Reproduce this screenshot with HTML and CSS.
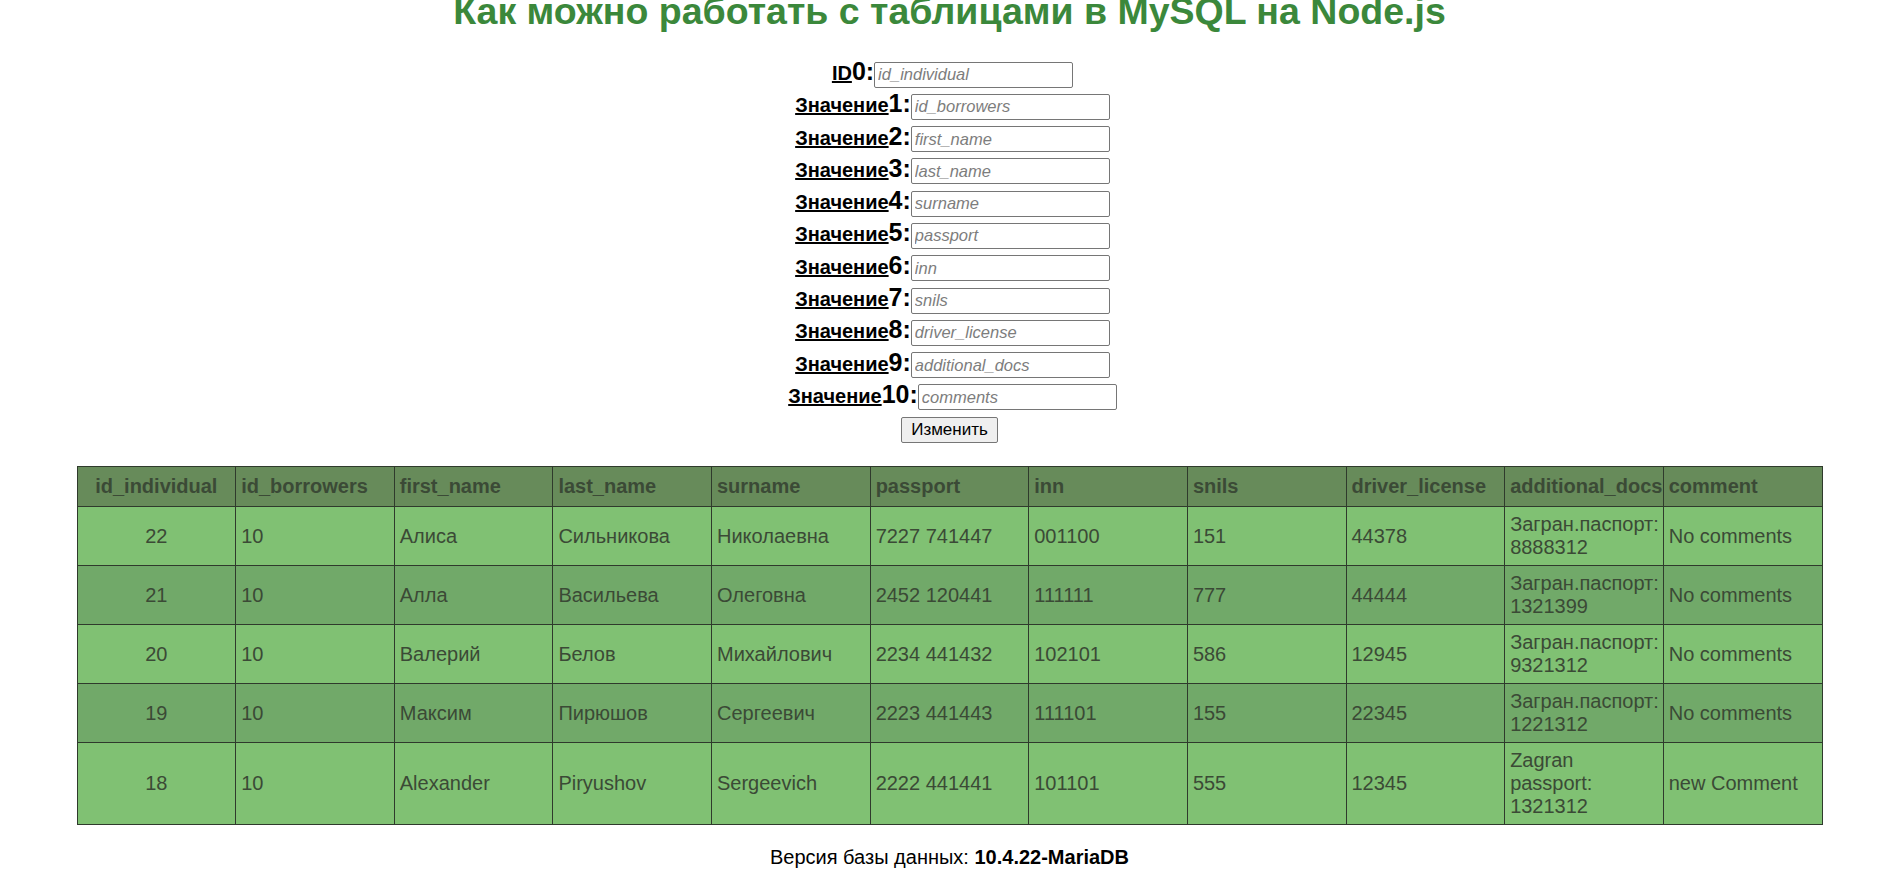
FILE: index.html
```html
<!DOCTYPE html>
<html lang="ru">
<head>
<meta charset="utf-8">
<title>MySQL на Node.js</title>
<link rel="stylesheet" href="styles.css">
</head>
<body>
<div class="page">
  <h1 class="title">Как можно работать с таблицами в MySQL на Node.js</h1>
  <form class="edit-form">
    <div class="field"><u class="lbl">ID</u><b class="num">0:</b><input class="inp" type="text" placeholder="id_individual"></div>
    <div class="field"><u class="lbl">Значение</u><b class="num">1:</b><input class="inp" type="text" placeholder="id_borrowers"></div>
    <div class="field"><u class="lbl">Значение</u><b class="num">2:</b><input class="inp" type="text" placeholder="first_name"></div>
    <div class="field"><u class="lbl">Значение</u><b class="num">3:</b><input class="inp" type="text" placeholder="last_name"></div>
    <div class="field"><u class="lbl">Значение</u><b class="num">4:</b><input class="inp" type="text" placeholder="surname"></div>
    <div class="field"><u class="lbl">Значение</u><b class="num">5:</b><input class="inp" type="text" placeholder="passport"></div>
    <div class="field"><u class="lbl">Значение</u><b class="num">6:</b><input class="inp" type="text" placeholder="inn"></div>
    <div class="field"><u class="lbl">Значение</u><b class="num">7:</b><input class="inp" type="text" placeholder="snils"></div>
    <div class="field"><u class="lbl">Значение</u><b class="num">8:</b><input class="inp" type="text" placeholder="driver_license"></div>
    <div class="field"><u class="lbl">Значение</u><b class="num">9:</b><input class="inp" type="text" placeholder="additional_docs"></div>
    <div class="field"><u class="lbl">Значение</u><b class="num">10:</b><input class="inp" type="text" placeholder="comments"></div>
    <div class="actions"><button class="btn" type="button">Изменить</button></div>
  </form>
  <table class="data">
    <thead>
      <tr>
        <th>id_individual</th><th>id_borrowers</th><th>first_name</th><th>last_name</th><th>surname</th><th>passport</th><th>inn</th><th>snils</th><th>driver_license</th><th>additional_docs</th><th>comment</th>
      </tr>
    </thead>
    <tbody>
      <tr class="light">
        <td>22</td><td>10</td><td>Алиса</td><td>Сильникова</td><td>Николаевна</td><td>7227 741447</td><td>001100</td><td>151</td><td>44378</td><td>Загран.паспорт: 8888312</td><td>No comments</td>
      </tr>
      <tr class="dark">
        <td>21</td><td>10</td><td>Алла</td><td>Васильева</td><td>Олеговна</td><td>2452 120441</td><td>111111</td><td>777</td><td>44444</td><td>Загран.паспорт: 1321399</td><td>No comments</td>
      </tr>
      <tr class="light">
        <td>20</td><td>10</td><td>Валерий</td><td>Белов</td><td>Михайлович</td><td>2234 441432</td><td>102101</td><td>586</td><td>12945</td><td>Загран.паспорт: 9321312</td><td>No comments</td>
      </tr>
      <tr class="dark">
        <td>19</td><td>10</td><td>Максим</td><td>Пирюшов</td><td>Сергеевич</td><td>2223 441443</td><td>111101</td><td>155</td><td>22345</td><td>Загран.паспорт: 1221312</td><td>No comments</td>
      </tr>
      <tr class="light">
        <td>18</td><td>10</td><td>Alexander</td><td>Piryushov</td><td>Sergeevich</td><td>2222 441441</td><td>101101</td><td>555</td><td>12345</td><td>Zagran passport: 1321312</td><td>new Comment</td>
      </tr>
    </tbody>
  </table>
  <p class="version">Версия базы данных: <b>10.4.22-MariaDB</b></p>
</div>
</body>
</html>
```

FILE: styles.css
```css
html, body {
  margin: 0;
  padding: 0;
  background: #ffffff;
}

body {
  font-family: "Liberation Sans", Arial, sans-serif;
  font-size: 20px;
  color: #000000;
}

.page {
  padding-left: 14px;
}

.title {
  margin: -10px 0 0;
  font-size: 37.5px;
  font-weight: bold;
  color: #3b883b;
  text-align: center;
}

.edit-form {
  margin: 24px 0 0;
  padding-left: 6px;
}

.field {
  height: 32.3px;
  text-align: center;
  white-space: nowrap;
}

.lbl {
  font-weight: bold;
  font-size: 20px;
  text-decoration: underline;
}

.num {
  font-weight: bold;
  font-size: 25px;
}

.inp {
  box-sizing: border-box;
  width: 199px;
  height: 26px;
  margin: 0;
  padding: 1px 3px;
  border: 1px solid #767676;
  border-radius: 2px;
  font-family: "Liberation Sans", Arial, sans-serif;
  font-size: 16.5px;
  background: #ffffff;
}

.inp::placeholder {
  color: #7d7d7d;
  font-style: italic;
}

.actions {
  margin-top: 5px;
  margin-left: -6px;
  text-align: center;
}

.btn {
  box-sizing: border-box;
  height: 26px;
  padding: 0 9px;
  border: 1px solid #767676;
  border-radius: 2px;
  background: #efefef;
  font-family: "Liberation Sans", Arial, sans-serif;
  font-size: 17px;
  color: #000000;
}

.data {
  width: 1746px;
  margin: 23px auto 0;
  border-collapse: collapse;
  table-layout: fixed;
  color: #3b4a36;
}

.data th,
.data td {
  border: 1px solid #2f3a2c;
  text-align: left;
  vertical-align: middle;
  line-height: 23px;
  overflow: visible;
}

.data th {
  padding: 8px 5px;
  background: #678b5a;
  font-weight: bold;
  white-space: nowrap;
}

.data td {
  padding: 6px 5px;
}

.data th:first-child,
.data td:first-child {
  text-align: center;
}

.data tr.light td {
  background: #80c173;
}

.data tr.dark td {
  background: #71a969;
}

.version {
  margin: 21px 0 0;
  text-align: center;
  line-height: 23px;
}
```
